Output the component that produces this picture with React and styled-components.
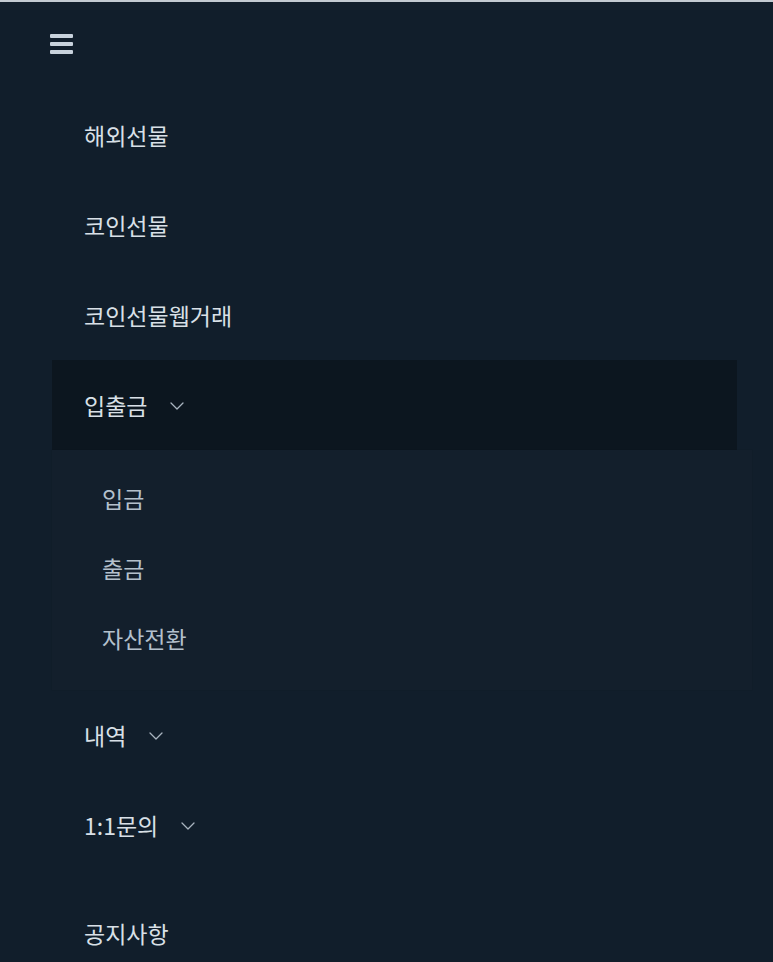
import React from "react";
import styled, { createGlobalStyle } from "styled-components";

const Global = createGlobalStyle`
  html, body { margin: 0; padding: 0; background: #111e2b; }
  body { font-family: "Noto Sans CJK KR", "Noto Sans", sans-serif; }
  * { box-sizing: border-box; }
`;

const Page = styled.div`
  min-height: 962px;
  background: #111e2b;
  border-top: 2px solid #c3cad1;
`;

const Header = styled.header`
  height: 88px;
  padding: 32px 0 0 50px;
`;

const Burger = styled.button`
  display: flex;
  flex-direction: column;
  gap: 4.5px;
  width: 23px;
  padding: 0;
  border: 0;
  background: transparent;
  cursor: pointer;
`;

const BurgerBar = styled.span`
  display: block;
  height: 3.5px;
  border-radius: 1px;
  background: #c8d2dc;
`;

const Menu = styled.nav`
  display: flex;
  flex-direction: column;
  padding-left: 52px;
`;

const Row = styled.div`
  display: flex;
  align-items: center;
  height: 90px;
  padding-left: 32px;
  margin-right: ${(p) => (p.$active ? "36px" : "0")};
  margin-top: ${(p) => p.$gap || 0}px;
  background: ${(p) => (p.$active ? "#0c161f" : "transparent")};
  color: #d9e0e7;
  font-size: 23px;
  font-weight: 400;
`;

const Chevron = styled.svg`
  margin-left: 23px;
  margin-top: 2px;
  flex-shrink: 0;
`;

const SubPanel = styled.div`
  display: flex;
  flex-direction: column;
  margin-right: 21px;
  padding: 13px 0 17px;
  background: #131f2c;
  box-shadow: 0 0 1px rgba(0, 0, 0, 0.15);
`;

const SubItem = styled.div`
  display: flex;
  align-items: center;
  height: 70px;
  padding-left: 50px;
  color: #b3c0cc;
  font-size: 23px;
  font-weight: 400;
`;

const Down = () => (
  <Chevron width="14" height="8" viewBox="0 0 14 8" fill="none">
    <path d="M1 1 L7 7 L13 1" stroke="#a9b4bf" strokeWidth="1.3" strokeLinecap="round" strokeLinejoin="round" />
  </Chevron>
);

export default function App() {
  return (
    <>
      <Global />
      <Page>
        <Header>
          <Burger aria-label="menu">
            <BurgerBar />
            <BurgerBar />
            <BurgerBar />
          </Burger>
        </Header>
        <Menu>
          <Row>해외선물</Row>
          <Row>코인선물</Row>
          <Row>코인선물웹거래</Row>
          <Row $active>
            입출금
            <Down />
          </Row>
          <SubPanel>
            <SubItem>입금</SubItem>
            <SubItem>출금</SubItem>
            <SubItem>자산전환</SubItem>
          </SubPanel>
          <Row>
            내역
            <Down />
          </Row>
          <Row>
            1:1문의
            <Down />
          </Row>
          <Row $gap={18}>공지사항</Row>
        </Menu>
      </Page>
    </>
  );
}
